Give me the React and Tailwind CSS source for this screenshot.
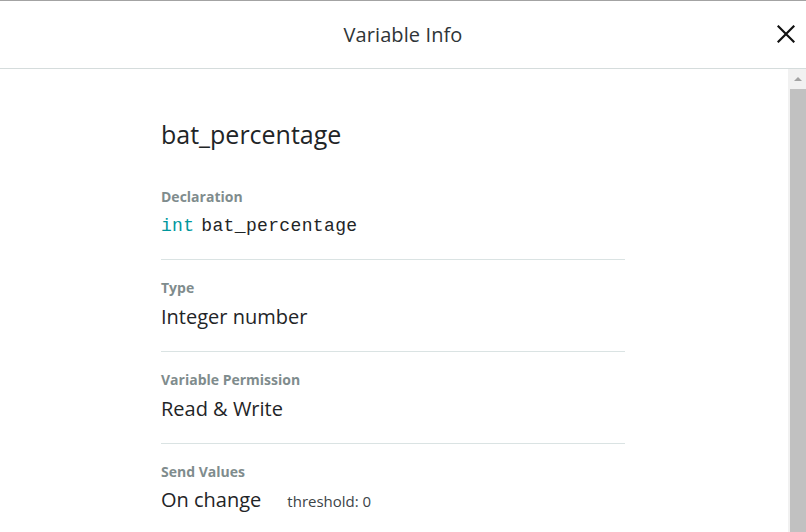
export default function App() {
  const sections = [
    { label: 'Type', value: 'Integer number' },
    { label: 'Variable Permission', value: 'Read & Write' },
  ];

  return (
    <div className="w-[806px] h-[532px] overflow-hidden bg-white flex flex-col border-t border-[#a3a3a3]" style={{ fontFamily: '"Open Sans", sans-serif' }}>
      {/* Header */}
      <div className="h-[68px] shrink-0 flex items-center justify-center relative border-b border-[#d5dcdc]">
        <h1 className="text-[20px] text-[#2f3537] tracking-[0.1px]">Variable Info</h1>
        <button className="absolute right-[10px] top-[23px] w-[20px] h-[20px] flex items-center justify-center">
          <svg width="18" height="18" viewBox="0 0 18 18">
            <path d="M1.5 1.5 L16.5 16.5 M16.5 1.5 L1.5 16.5" stroke="#111" strokeWidth="2.2" strokeLinecap="square" />
          </svg>
        </button>
      </div>

      {/* Body */}
      <div className="flex-1 flex min-h-0">
        <div className="flex-1 pl-[161px] pt-[49px]">
          <div className="w-[464px]">
            <h2 className="text-[25px] leading-[32px] text-[#1f2527] mb-[19px]">bat_percentage</h2>

            <div className="pt-[18px] pb-[19px] border-b border-[#dae3e3]">
              <p className="text-[14px] leading-[20px] font-bold text-[#7f8c8d]">Declaration</p>
              <p className="mt-[5px] flex text-[18px] leading-[28px] text-[#1f2527]" style={{ fontFamily: '"Liberation Mono", monospace' }}>
                <span className="text-[#00979d] tracking-[0.3px]">int</span>
                <span className="ml-[7px] tracking-[0.35px]">bat_percentage</span>
              </p>
            </div>

            {sections.map((s) => (
              <div key={s.label} className="pt-[18px] pb-[20px] border-b border-[#dae3e3]">
                <p className="text-[14px] leading-[20px] font-bold text-[#7f8c8d]">{s.label}</p>
                <p className="mt-[5px] text-[20px] leading-[28px] text-[#1f2527]">{s.value}</p>
              </div>
            ))}

            <div className="pt-[18px]">
              <p className="text-[14px] leading-[20px] font-bold text-[#7f8c8d]">Send Values</p>
              <div className="mt-[4px] flex items-baseline gap-[26px]">
                <span className="text-[20px] leading-[28px] text-[#1f2527]">On change</span>
                <span className="text-[15px] text-[#3c4447]">threshold: 0</span>
              </div>
            </div>
          </div>
        </div>

        {/* Scrollbar */}
        <div className="w-[18px] shrink-0 bg-[#f1f1f1] flex flex-col items-end">
          <div className="w-[16px] h-[20px] flex items-center justify-center">
            <div className="w-0 h-0 border-l-[4px] border-r-[4px] border-b-[4px] border-l-transparent border-r-transparent border-b-[#a3a3a3]" />
          </div>
          <div className="w-[16px] flex-1 bg-[#c1c1c1]" />
        </div>
      </div>
    </div>
  );
}
